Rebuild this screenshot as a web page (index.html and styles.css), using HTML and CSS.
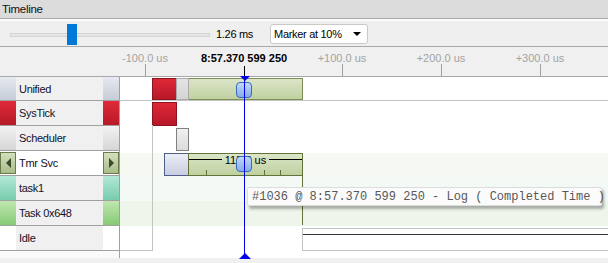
FILE: index.html
```html
<!DOCTYPE html>
<html lang="en">
<head>
  <meta charset="UTF-8" />
  <title>Timeline</title>
  <link rel="stylesheet" href="styles.css">
</head>
<body>

  <div class="titlebar">Timeline</div>

  <div class="toolbar">
    <div class="slider">
      <div class="slider-track"></div>
      <div class="slider-thumb"></div>
    </div>
    <span class="zoom-value">1.26 ms</span>
    <div class="dropdown">
      <span>Marker at 10%</span>
      <span class="caret"></span>
    </div>
  </div>

  <div class="ruler">
    <div class="ruler-gutter"></div>
    <div class="ruler-scale">
      <span class="tick-label" style="left:25px">-100.0 us</span>
      <span class="tick" style="left:25px"></span>
      <span class="tick-label now" style="left:124px">8:57.370 599 250</span>
      <span class="tick-label" style="left:222px">+100.0 us</span>
      <span class="tick" style="left:222px"></span>
      <span class="tick-label" style="left:321px">+200.0 us</span>
      <span class="tick" style="left:321px"></span>
      <span class="tick-label" style="left:420px">+300.0 us</span>
      <span class="tick" style="left:420px"></span>
      <span class="marker-stem"></span>
    </div>
  </div>

  <div class="timeline">
    <div class="labels">
      <div class="label-row first">
        <span class="swatch unified"></span><span class="name">Unified</span><span class="swatch unified"></span>
      </div>
      <div class="label-row">
        <span class="swatch systick"></span><span class="name">SysTick</span><span class="swatch systick"></span>
      </div>
      <div class="label-row">
        <span class="swatch scheduler"></span><span class="name">Scheduler</span><span class="swatch scheduler"></span>
      </div>
      <div class="label-row selected">
        <span class="swatch nav"><span class="arrow left"></span></span><span class="name">Tmr Svc</span><span class="swatch nav"><span class="arrow right"></span></span>
      </div>
      <div class="label-row">
        <span class="swatch task1"></span><span class="name">task1</span><span class="swatch task1"></span>
      </div>
      <div class="label-row">
        <span class="swatch task648"></span><span class="name">Task 0x648</span><span class="swatch task648"></span>
      </div>
      <div class="label-row">
        <span class="swatch idle"></span><span class="name">Idle</span><span class="swatch idle"></span>
      </div>
    </div>

    <div class="chart">
      <div class="track first unified-track">
        <div class="block red" style="left:32px;width:25px"></div>
        <div class="block grey" style="left:56px;width:13px"></div>
        <div class="block green" style="left:68px;width:115px"></div>
        <div class="handle"></div>
      </div>
      <div class="track">
        <div class="block red tall" style="left:32px;width:25px"></div>
      </div>
      <div class="track">
        <div class="block grey dark low" style="left:56px;width:13px"></div>
      </div>
      <div class="track tmr">
        <div class="block lavender low" style="left:44px;width:25px"></div>
        <div class="block green dark low" style="left:68px;width:115px">
          <div class="measure">
            <span class="measure-line"></span>
            <span class="measure-text">115.2 us</span>
            <span class="measure-line"></span>
          </div>
          <span class="measure-tick" style="left:17px"></span>
          <span class="measure-tick" style="left:75px"></span>
          <span class="measure-tick" style="left:91px"></span>
        </div>
        <div class="handle"></div>
      </div>
      <div class="track task1-track"></div>
      <div class="track task648-track"></div>
      <div class="track"></div>

      <div class="idle-left"></div>
      <div class="olive-edge"></div>
      <div class="idle-right"><span class="idle-line"></span></div>

      <div class="marker-line"></div>
      <div class="marker-top"></div>
      <div class="marker-bottom"></div>

      <div class="tooltip">#1036 @ 8:57.370 599 250 - Log ( Completed Time )</div>
    </div>
  </div>

  <div class="hscroll"></div>

</body>
</html>
```

FILE: styles.css
```css
* {
  box-sizing: border-box;
}
body {
  margin: 0;
  width: 608px;
  height: 263px;
  overflow: hidden;
  background-color: #f0f0f0;
  font-family: 'Liberation Sans', Arial, sans-serif;
  font-size: 11px;
  color: #000;
}

/* title + toolbar */
.titlebar {
  height: 19px;
  line-height: 18px;
  padding-left: 2px;
  background-color: #dcdcdc;
  border-bottom: 1px solid #aaaaaa;
  letter-spacing: -0.3px;
  font-size: 11.5px;
  color: #101020;
}
.toolbar {
  height: 28px;
  display: flex;
  align-items: center;
  background-color: #efefef;
  border-top: 2px solid #fbfbfb;
  border-bottom: 1px solid #a9a9a9;
}
.slider {
  position: relative;
  width: 200px;
  height: 21px;
  margin-left: 10px;
  margin-top: 1px;
}
.slider-track {
  position: absolute;
  left: 0;
  right: 0;
  top: 9px;
  height: 4px;
  background-color: #e6e6e6;
  border: 1px solid #d4d4d4;
}
.slider-thumb {
  position: absolute;
  left: 57px;
  top: 0;
  width: 10px;
  height: 21px;
  background-color: #0078d7;
}
.zoom-value {
  margin-left: 6px;
  letter-spacing: -0.3px;
  margin-top: 1px;
}
.dropdown {
  display: flex;
  align-items: center;
  justify-content: space-between;
  width: 98px;
  height: 20px;
  margin-left: 17px;
  margin-top: 1px;
  padding: 0 6px 0 3px;
  background-color: #fff;
  border: 1px solid #c9c9c9;
  border-radius: 3px;
  letter-spacing: -0.3px;
}
.caret {
  width: 0;
  height: 0;
  border-left: 4px solid transparent;
  border-right: 4px solid transparent;
  border-top: 4px solid #000;
}

/* ruler */
.ruler {
  display: flex;
  height: 30px;
  background-color: #f0f0f0;
  border-bottom: 1px solid #a8a8a8;
}
.ruler-gutter {
  width: 120px;
}
.ruler-scale {
  position: relative;
  flex: 1;
}
.tick-label {
  position: absolute;
  top: 5px;
  transform: translateX(-50%);
  color: #a3a3a3;
  white-space: nowrap;
}
.tick-label.now {
  color: #000;
  font-weight: bold;
}
.tick {
  position: absolute;
  bottom: 0;
  width: 1px;
  height: 12px;
  background-color: #a0a0a0;
}
.marker-stem {
  position: absolute;
  left: 124px;
  bottom: 0;
  width: 1px;
  height: 10px;
  background-color: #000;
}

/* rows */
.timeline {
  display: flex;
  height: 181px;
  background-color: #fff;
}
.labels {
  width: 120px;
  border-right: 1px solid #a0a0a0;
  background-color: #fafafa;
}
.label-row {
  display: flex;
  height: 25px;
  background-color: #f0f0f0;
  border-bottom: 1px solid #a0a0a0;
}
.label-row.first {
  height: 24px;
}
.label-row.selected {
  background-color: #fff;
}
.name {
  flex: 1;
  padding-left: 3px;
  line-height: 24px;
  color: #10102a;
  letter-spacing: -0.3px;
}
.swatch {
  width: 16px;
}
.swatch.unified {
  background: linear-gradient(#e6e9f0, #c6ccd8);
}
.swatch.systick {
  background: linear-gradient(#e02a38, #b61a28);
}
.swatch.scheduler {
  background: linear-gradient(#f2f2f2, #d6d6d6);
}
.swatch.task1 {
  background: linear-gradient(#b2e8d6, #78ccae);
}
.swatch.task648 {
  background: linear-gradient(#c0e6b0, #86ca74);
}
.swatch.idle {
  background-color: #fff;
}
.swatch.nav {
  display: flex;
  align-items: center;
  justify-content: center;
  height: 22px;
  margin-top: 1px;
  background: linear-gradient(#d4dfbe, #a9bd8a);
  border: 1px solid #6b7a4a;
}
.arrow {
  width: 0;
  height: 0;
  border-top: 5px solid transparent;
  border-bottom: 5px solid transparent;
}
.arrow.left {
  border-right: 5px solid #3d4a2c;
}
.arrow.right {
  border-left: 5px solid #3d4a2c;
}

.chart {
  position: relative;
  flex: 1;
}
.track {
  position: relative;
  height: 25px;
}
.track.first {
  height: 24px;
  border-top: 1px solid #fff;
  border-bottom: 1px solid #c4c4c4;
}
.track.tmr {
  background-color: #f6f8f2;
  background-clip: content-box;
  padding-top: 2px;
}
.task1-track {
  background-color: #f3faf6;
}
.task648-track {
  background-color: #eef6ec;
}

.block {
  position: absolute;
  top: 0;
  height: 22px;
  border: 1px solid;
}
.block.tall {
  top: 1px;
  height: 24px;
}
.block.low {
  top: 2px;
  height: 23px;
}
.block.red {
  background: linear-gradient(#de2836, #b8172a);
  border-color: #8b1420;
}
.block.grey {
  background: linear-gradient(#e4e4e4, #d4d4d4);
  border-color: #aaaaaa;
  z-index: 1;
}
.block.grey.dark {
  background: linear-gradient(#f0f0f0, #dcdcdc);
  border-color: #808080;
}
.block.green {
  background: linear-gradient(#dbe5c8, #bfd0a0);
  border-color: #7d8d55;
}
.block.green.dark {
  border-color: #627238;
}
.block.lavender {
  background: linear-gradient(#eceef6, #c8cde0);
  border-color: #4e5d8c;
}

.measure {
  display: flex;
  align-items: center;
  gap: 3px;
  height: 11px;
}
.measure-line {
  flex: 1;
  height: 1px;
  background-color: #000;
}
.measure-text {
  color: #000;
}
.measure-tick {
  position: absolute;
  bottom: 0;
  width: 1px;
  height: 5px;
  background-color: #627238;
}

.handle {
  position: absolute;
  left: 116px;
  top: 4px;
  width: 16px;
  height: 16px;
  border: 1px solid #3b69bd;
  border-radius: 4px;
  background: linear-gradient(#c2d9f6, #86acea);
  z-index: 2;
}
.track.tmr .handle {
  top: 5px;
}

.idle-left {
  position: absolute;
  left: 0;
  top: 48px;
  width: 33px;
  height: 126px;
  border-right: 1px solid #c4c4c4;
  border-bottom: 1px solid #c4c4c4;
}
.olive-edge {
  position: absolute;
  left: 182px;
  top: 98px;
  width: 1px;
  height: 50px;
  background-color: #627238;
}
.idle-right {
  position: absolute;
  left: 182px;
  right: 0;
  top: 151px;
  height: 23px;
  border: 1px solid #c4c4c4;
  border-right: none;
}
.idle-line {
  display: block;
  margin-top: 5px;
  height: 1px;
  background-color: #333;
}

.marker-line {
  position: absolute;
  left: 124px;
  top: 0;
  width: 1px;
  height: 179px;
  background-color: #0000e8;
  z-index: 3;
}
.marker-top {
  position: absolute;
  left: 119px;
  top: -1px;
  width: 0;
  height: 0;
  border-left: 5px solid transparent;
  border-right: 5px solid transparent;
  border-top: 5px solid #0000e8;
  z-index: 3;
  margin-left: 0.5px;
}
.marker-bottom {
  position: absolute;
  left: 118px;
  bottom: -1px;
  width: 0;
  height: 0;
  border-left: 6px solid transparent;
  border-right: 6px solid transparent;
  border-bottom: 6px solid #0000e8;
  z-index: 3;
  margin-left: 0.5px;
}

.tooltip {
  position: absolute;
  left: 127px;
  top: 110px;
  width: 355px;
  height: 19px;
  padding-left: 4px;
  line-height: 18px;
  font-family: 'Liberation Mono', 'Courier New', monospace;
  font-size: 12px;
  color: #585858;
  background-color: #fbfbfb;
  border: 1px solid #dcdcdc;
  border-radius: 2px;
  box-shadow: 2px 3px 3px rgba(0,0,0,0.3);
  white-space: nowrap;
  z-index: 4;
}

.hscroll {
  height: 6px;
  background-color: #f0f0f0;
}
```
